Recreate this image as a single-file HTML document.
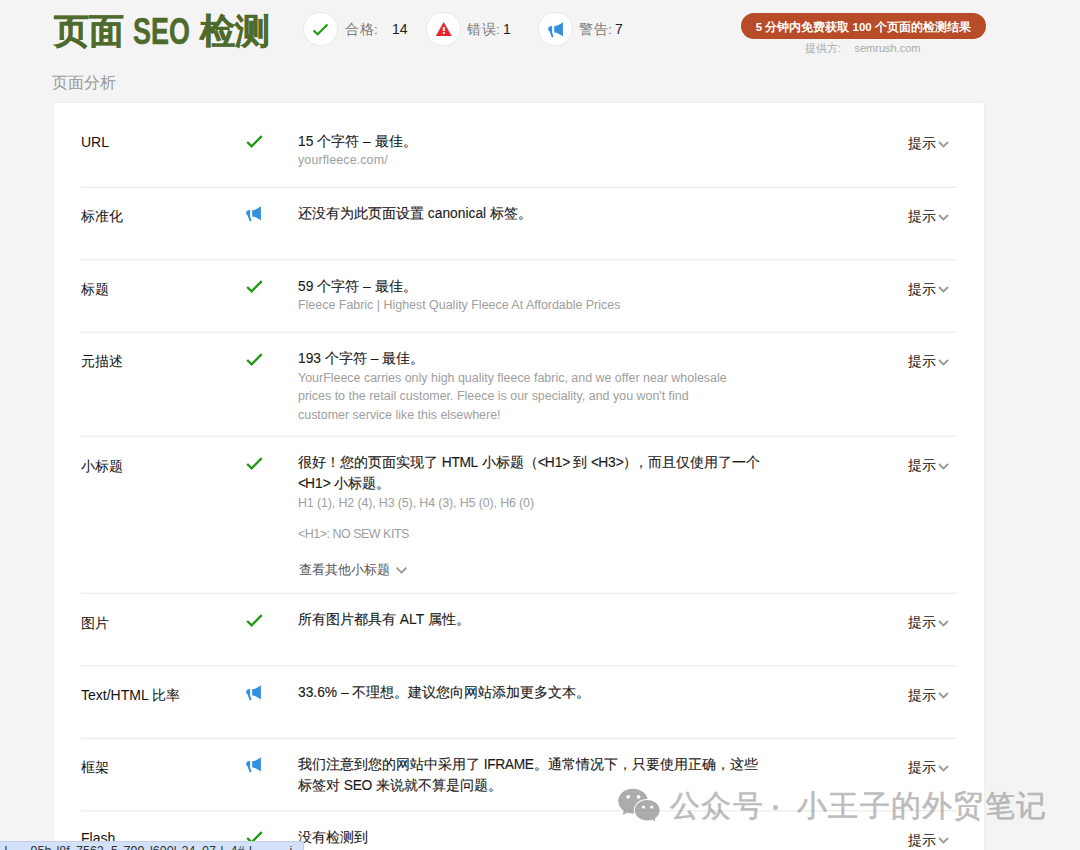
<!DOCTYPE html>
<html><head><meta charset="utf-8">
<style>
*{margin:0;padding:0;box-sizing:border-box}
html,body{width:1080px;height:850px;overflow:hidden;background:#f4f4f4;font-family:"Liberation Sans",sans-serif;color:#222}
.a{position:absolute;white-space:nowrap}
#title{left:53.5px;top:9px;font-size:35px;font-weight:bold;color:#4f6b2c;line-height:44px;-webkit-text-stroke:0.5px #4f6b2c}
.circ{position:absolute;width:34.4px;height:34.4px;border-radius:50%;background:#fff;top:11.8px;border:1px solid #e9e9e9}
.stl{font-size:13.5px;color:#7a7a7a;top:20.9px;line-height:18px;letter-spacing:0.5px}
.stn{font-size:14px;color:#222;top:20px;line-height:18px}
#btn{left:740.6px;top:13px;width:245.6px;padding-top:0.8px;height:26px;border-radius:13px;background:#b84c29;color:#fff;font-size:11.5px;font-weight:bold;text-align:center;line-height:26px}
#prov{left:805px;top:41.2px;font-size:11.3px;color:#aaa;line-height:14px}
#prov2{left:854.5px;top:41.6px;font-size:11px;color:#aaa;line-height:13px}
#sec{left:52px;top:73px;font-size:16px;color:#999;line-height:20px}
#card{position:absolute;left:53.6px;top:103px;width:930.8px;height:800px;background:#fff;border-radius:3px;box-shadow:0 0 2px rgba(0,0,0,.08)}
.sep{position:absolute;left:81px;width:876px;height:1px;background:#ececec}
.lab{left:81px;font-size:14px;line-height:20px;color:#111;}
.txt{left:298px;font-size:13.8px;line-height:21px;color:#1a1a1a;-webkit-text-stroke:0.12px #1a1a1a}
.gr{left:298px;font-size:12.45px;line-height:18.8px;color:#9e9e9e}
.n{letter-spacing:-1px}
.nl{letter-spacing:-0.4px}
.tip{left:908.3px;font-size:13.6px;line-height:20px;color:#111;}
.tip svg{position:absolute;left:31px;top:6px}
</style></head><body>
<div class="a" id="title">页面 <span style="display:inline-block;font-size:37px;position:relative;top:0.8px;transform:scaleX(0.728);transform-origin:0 0;width:57px">SEO</span> 检测</div>
<div class="circ" style="left:303.2px"></div>
<svg class="a" style="left:306px;top:17.6px" width="30" height="25" viewBox="0 0 30 25"><path d="M7.6 12.4 L11.6 16.3 L21.5 6.4" fill="none" stroke="#1c9b0e" stroke-width="2.1"/></svg>
<div class="a stl" style="left:345px">合格:</div><div class="a stn" style="left:392px">14</div>
<div class="circ" style="left:426.2px"></div>
<svg class="a" style="left:423px;top:8px" width="40" height="40" viewBox="0 0 40 40"><path d="M20.7 13.9 L28.7 27.9 L12.8 27.9 Z" fill="#e8262b"/><rect x="19.8" y="19.1" width="2.1" height="4" fill="#fff"/><rect x="19.8" y="24.2" width="2.1" height="1.7" fill="#fff"/></svg>
<div class="a stl" style="left:467px">错误:</div><div class="a stn" style="left:503px">1</div>
<div class="circ" style="left:538.2px"></div>
<svg class="a" style="left:542px;top:15.5px" width="30" height="28" viewBox="0 0 30 28"><path d="M12.2 10.2 C15 10.2 18 8.6 20.9 6.3 L20.9 20.6 C18 18.4 15 16.5 12.2 16.5 Z" fill="#3290de"/><path d="M10.1 10.1 L10.1 16.4 L11.4 20.2 Q11.4 21.6 10.1 21.3 Q9.6 21.1 9.4 20.5 L7.5 15.3 Q6 14.5 6.1 12.9 Q6.3 10.4 10.1 10.1 Z" fill="#3290de"/></svg>
<div class="a stl" style="left:579px">警告:</div><div class="a stn" style="left:615px">7</div>
<div class="a" id="btn">5 分钟内免费获取 100 个页面的检测结果</div>
<div class="a" id="prov">提供方:</div><div class="a" id="prov2">semrush.com</div>
<div class="a" id="sec">页面分析</div>
<div id="card"></div>
<div class="sep" style="top:187px;background:#eeeeee"></div><div class="sep" style="top:186px;background:#f8f8f8"></div>
<div class="sep" style="top:259px;background:#eeeeee"></div><div class="sep" style="top:260px;background:#f8f8f8"></div>
<div class="sep" style="top:332px;background:#eeeeee"></div><div class="sep" style="top:331px;background:#f8f8f8"></div>
<div class="sep" style="top:436px;background:#eeeeee"></div><div class="sep" style="top:435px;background:#f8f8f8"></div>
<div class="sep" style="top:593px;background:#eeeeee"></div><div class="sep" style="top:592px;background:#f8f8f8"></div>
<div class="sep" style="top:665px;background:#eeeeee"></div><div class="sep" style="top:666px;background:#f8f8f8"></div>
<div class="sep" style="top:738px;background:#eeeeee"></div><div class="sep" style="top:737px;background:#f8f8f8"></div>
<div class="sep" style="top:810px;background:#eeeeee"></div><div class="sep" style="top:811px;background:#f8f8f8"></div>
<div class="a lab" style="top:131.7px">URL</div>
<svg class="a" style="left:240px;top:130.4px" width="30" height="25" viewBox="0 0 30 25"><path d="M7.2 12 L11.6 16.3 L21.7 6.2" fill="none" stroke="#1c9b0e" stroke-width="2.35"/></svg>
<div class="a txt" style="top:130.5px">15 个字符 – 最佳。</div>
<div class="a gr" style="top:151.1px"><span style='letter-spacing:0.13px'>yourfleece.com/</span></div>
<div class="a tip" style="top:134.3px">提示</div><svg class="a" style="left:936px;top:140.00px" width="14" height="9" viewBox="0 0 14 9"><path d="M3 2 L7.5 6.5 L12 2" fill="none" stroke="#999" stroke-width="1.8"/></svg>
<div class="a lab" style="top:206.3px">标准化</div>
<svg class="a" style="left:240px;top:200.15px" width="30" height="28" viewBox="0 0 30 28"><path d="M12.2 10.2 C15 10.2 18 8.6 20.9 6.3 L20.9 20.6 C18 18.4 15 16.5 12.2 16.5 Z" fill="#3290de"/><path d="M10.1 10.1 L10.1 16.4 L11.4 20.2 Q11.4 21.6 10.1 21.3 Q9.6 21.1 9.4 20.5 L7.5 15.3 Q6 14.5 6.1 12.9 Q6.3 10.4 10.1 10.1 Z" fill="#3290de"/></svg>
<div class="a txt" style="top:202.8px">还没有为此页面设置 canonical 标签。</div>
<div class="a tip" style="top:206.8px">提示</div><svg class="a" style="left:936px;top:212.50px" width="14" height="9" viewBox="0 0 14 9"><path d="M3 2 L7.5 6.5 L12 2" fill="none" stroke="#999" stroke-width="1.8"/></svg>
<div class="a lab" style="top:279px">标题</div>
<svg class="a" style="left:240px;top:275.25px" width="30" height="25" viewBox="0 0 30 25"><path d="M7.2 12 L11.6 16.3 L21.7 6.2" fill="none" stroke="#1c9b0e" stroke-width="2.35"/></svg>
<div class="a txt" style="top:275.85px">59 个字符 – 最佳。</div>
<div class="a gr" style="top:296.1px">Fleece Fabric | Highest Quality Fleece At Affordable Prices</div>
<div class="a tip" style="top:279.5px">提示</div><svg class="a" style="left:936px;top:285.20px" width="14" height="9" viewBox="0 0 14 9"><path d="M3 2 L7.5 6.5 L12 2" fill="none" stroke="#999" stroke-width="1.8"/></svg>
<div class="a lab" style="top:351.3px">元描述</div>
<svg class="a" style="left:240px;top:347.75px" width="30" height="25" viewBox="0 0 30 25"><path d="M7.2 12 L11.6 16.3 L21.7 6.2" fill="none" stroke="#1c9b0e" stroke-width="2.35"/></svg>
<div class="a txt" style="top:347.85px">193 个字符 – 最佳。</div>
<div class="a gr" style="top:368.7px">YourFleece carries only high quality fleece fabric, and we offer near wholesale<br>prices to the retail customer. Fleece is our speciality, and you won't find<br>customer service like this elsewhere!</div>
<div class="a tip" style="top:351.8px">提示</div><svg class="a" style="left:936px;top:357.50px" width="14" height="9" viewBox="0 0 14 9"><path d="M3 2 L7.5 6.5 L12 2" fill="none" stroke="#999" stroke-width="1.8"/></svg>
<div class="a lab" style="top:455.6px">小标题</div>
<svg class="a" style="left:240px;top:452.1px" width="30" height="25" viewBox="0 0 30 25"><path d="M7.2 12 L11.6 16.3 L21.7 6.2" fill="none" stroke="#1c9b0e" stroke-width="2.35"/></svg>
<div class="a txt" style="top:452.2px">很好！您的页面实现了 <span class=nl>HTML</span> 小标题（<span class=n>&lt;</span>H1<span class=n>&gt;</span> 到 <span class=n>&lt;</span>H3<span class=n>&gt;</span><span style='letter-spacing:-3px'>）</span>，而且仅使用了一个<br><span class=n>&lt;</span>H1<span class=n>&gt;</span> 小标题。</div>
<div class="a gr" style="top:493.8px"><span style='letter-spacing:-0.13px'>H1 (1), H2 (4), H3 (5), H4 (3), H5 (0), H6 (0)</span></div>
<div class="a gr" style="top:524.5px"><span style='letter-spacing:-0.47px'>&lt;H1&gt;: NO SEW KITS</span></div>
<div class="a tip" style="top:456.1px">提示</div><svg class="a" style="left:936px;top:461.80px" width="14" height="9" viewBox="0 0 14 9"><path d="M3 2 L7.5 6.5 L12 2" fill="none" stroke="#999" stroke-width="1.8"/></svg>
<div class="a lab" style="top:612.6px">图片</div>
<svg class="a" style="left:240px;top:608.8px" width="30" height="25" viewBox="0 0 30 25"><path d="M7.2 12 L11.6 16.3 L21.7 6.2" fill="none" stroke="#1c9b0e" stroke-width="2.35"/></svg>
<div class="a txt" style="top:608.9px">所有图片都具有 ALT 属性。</div>
<div class="a tip" style="top:613.1px">提示</div><svg class="a" style="left:936px;top:618.80px" width="14" height="9" viewBox="0 0 14 9"><path d="M3 2 L7.5 6.5 L12 2" fill="none" stroke="#999" stroke-width="1.8"/></svg>
<div class="a lab" style="top:685.2px">Text/HTML 比率</div>
<svg class="a" style="left:240px;top:678.8px" width="30" height="28" viewBox="0 0 30 28"><path d="M12.2 10.2 C15 10.2 18 8.6 20.9 6.3 L20.9 20.6 C18 18.4 15 16.5 12.2 16.5 Z" fill="#3290de"/><path d="M10.1 10.1 L10.1 16.4 L11.4 20.2 Q11.4 21.6 10.1 21.3 Q9.6 21.1 9.4 20.5 L7.5 15.3 Q6 14.5 6.1 12.9 Q6.3 10.4 10.1 10.1 Z" fill="#3290de"/></svg>
<div class="a txt" style="top:682.2px">33.6% – 不理想。建议您向网站添加更多文本。</div>
<div class="a tip" style="top:685.7px">提示</div><svg class="a" style="left:936px;top:691.40px" width="14" height="9" viewBox="0 0 14 9"><path d="M3 2 L7.5 6.5 L12 2" fill="none" stroke="#999" stroke-width="1.8"/></svg>
<div class="a lab" style="top:757.4px">框架</div>
<svg class="a" style="left:240px;top:751.25px" width="30" height="28" viewBox="0 0 30 28"><path d="M12.2 10.2 C15 10.2 18 8.6 20.9 6.3 L20.9 20.6 C18 18.4 15 16.5 12.2 16.5 Z" fill="#3290de"/><path d="M10.1 10.1 L10.1 16.4 L11.4 20.2 Q11.4 21.6 10.1 21.3 Q9.6 21.1 9.4 20.5 L7.5 15.3 Q6 14.5 6.1 12.9 Q6.3 10.4 10.1 10.1 Z" fill="#3290de"/></svg>
<div class="a txt" style="top:753.9px">我们注意到您的网站中采用了 <span class=nl>IFRAME</span>。通常情况下，只要使用正确，这些<br>标签对 <span class=nl>SEO</span> 来说就不算是问题。</div>
<div class="a tip" style="top:757.9px">提示</div><svg class="a" style="left:936px;top:763.60px" width="14" height="9" viewBox="0 0 14 9"><path d="M3 2 L7.5 6.5 L12 2" fill="none" stroke="#999" stroke-width="1.8"/></svg>
<div class="a lab" style="top:827.8px">Flash</div>
<svg class="a" style="left:240px;top:826.4px" width="30" height="25" viewBox="0 0 30 25"><path d="M7.2 12 L11.6 16.3 L21.7 6.2" fill="none" stroke="#1c9b0e" stroke-width="2.35"/></svg>
<div class="a txt" style="top:826.5px">没有检测到</div>
<div class="a tip" style="top:830.5px">提示</div><svg class="a" style="left:936px;top:836.20px" width="14" height="9" viewBox="0 0 14 9"><path d="M3 2 L7.5 6.5 L12 2" fill="none" stroke="#999" stroke-width="1.8"/></svg>
<div class="a" style="left:298.5px;top:560px;font-size:13.3px;line-height:20px;color:#555">查看其他小标题</div><svg class="a" style="left:395px;top:566px" width="13" height="9" viewBox="0 0 13 9"><path d="M1.6 1.6 L6.5 6.6 L11.4 1.6" fill="none" stroke="#999" stroke-width="1.8"/></svg>
<svg class="a" style="left:612px;top:780px" width="56" height="46" viewBox="0 0 56 46"><g opacity="0.62"><path d="M21.1 8.7 C13 8.7 6.5 14.2 6.5 21.1 C6.5 25 8.5 28.3 11.7 30.5 L10.8 35 L16 32.3 C17.6 32.9 19.3 33.3 21.1 33.4 Z" fill="#7a7a7a"/><ellipse cx="21.1" cy="21.1" rx="14.6" ry="12.4" fill="#7a7a7a"/><circle cx="16.2" cy="16.8" r="1.9" fill="#fff"/><circle cx="26.5" cy="16.8" r="1.9" fill="#fff"/><ellipse cx="35.2" cy="30.3" rx="13.4" ry="11.3" fill="#fff"/><ellipse cx="35.2" cy="30.3" rx="12.4" ry="10.3" fill="#7a7a7a"/><path d="M40 39 L43.3 41.7 L43 37 Z" fill="#7a7a7a"/><circle cx="31.4" cy="27" r="1.6" fill="#fff"/><circle cx="39.8" cy="27" r="1.6" fill="#fff"/></g></svg>
<div class="a" id="wm" style="left:669.5px;top:786px;font-size:30px;line-height:40px;letter-spacing:1.55px;color:#7c7c7c;-webkit-text-stroke:0.6px #7c7c7c;opacity:.5">公众号</div>
<div class="a" style="left:773.1px;top:804.5px;width:5px;height:5px;border-radius:50%;background:#7c7c7c;opacity:.5"></div>
<div class="a" id="wm2" style="left:797px;top:786px;font-size:30px;line-height:40px;letter-spacing:1.27px;color:#7c7c7c;-webkit-text-stroke:0.6px #7c7c7c;opacity:.5">小王子的外贸笔记</div>
<div class="a" style="left:0;top:841px;width:304px;height:12px;background:#d3e2fa;border-top:1px solid #c3cfe2;border-right:1px solid #c3cfe2;overflow:hidden;font-size:12.5px;line-height:14px;color:#333"><span style="position:absolute;left:4.6px;top:1.7px">l</span><span style="position:absolute;left:30.5px;top:1.7px">95b</span><span style="position:absolute;left:56.5px;top:1.7px">l8f</span><span style="position:absolute;left:76px;top:1.7px">7562</span><span style="position:absolute;left:111px;top:1.7px">5</span><span style="position:absolute;left:123.6px;top:1.7px">799</span><span style="position:absolute;left:150px;top:1.7px">l600l</span><span style="position:absolute;left:181.5px;top:1.7px">24</span><span style="position:absolute;left:202px;top:1.7px">07</span><span style="position:absolute;left:220.4px;top:1.7px">l</span><span style="position:absolute;left:230.5px;top:1.7px">4#</span><span style="position:absolute;left:249px;top:1.7px">l</span><span style="position:absolute;left:289.6px;top:1.7px">i</span></div>
</body></html>
